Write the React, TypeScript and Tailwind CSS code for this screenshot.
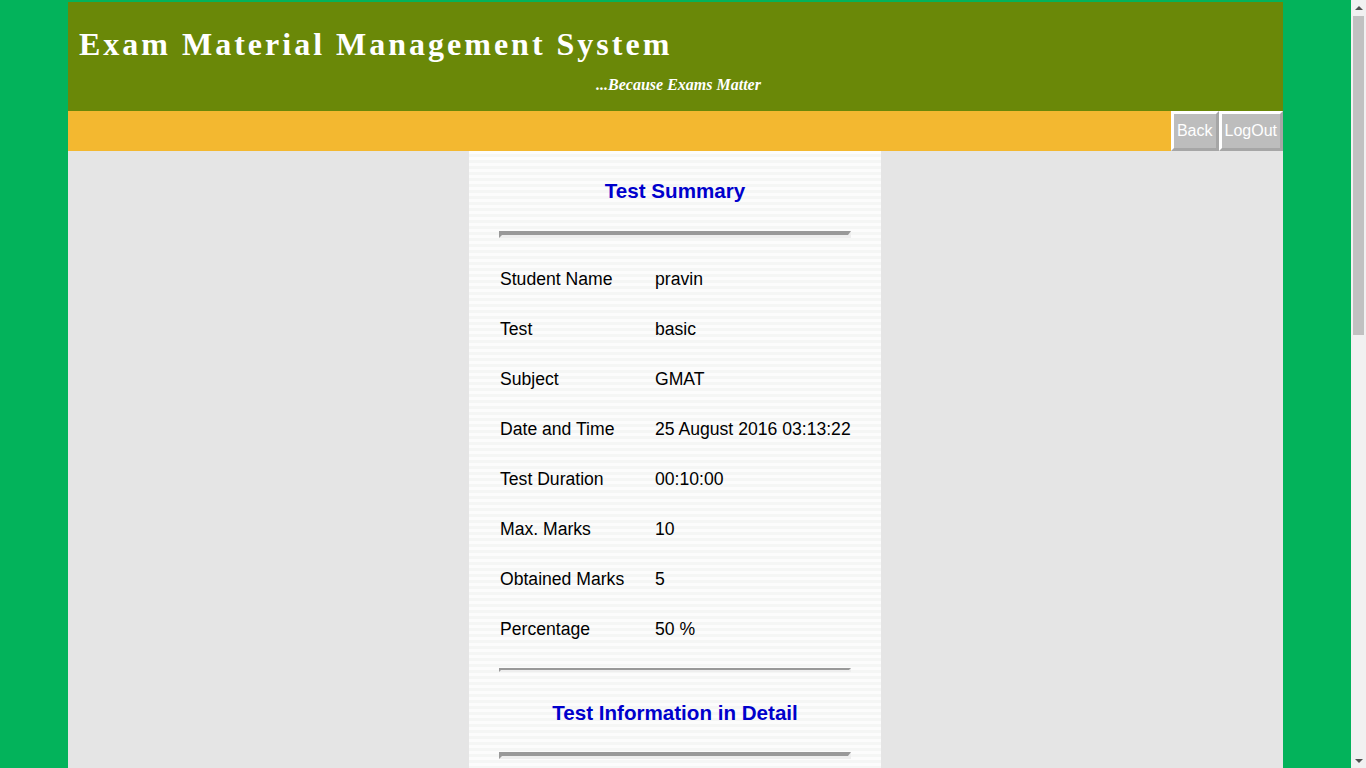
import React from "react";

const rows: [string, string][] = [
  ["Student Name", "pravin"],
  ["Test", "basic"],
  ["Subject", "GMAT"],
  ["Date and Time", "25 August 2016 03:13:22"],
  ["Test Duration", "00:10:00"],
  ["Max. Marks", "10"],
  ["Obtained Marks", "5"],
  ["Percentage", "50 %"],
];

function ThickRule({ className = "" }: { className?: string }) {
  return (
    <div
      className={
        "h-[7px] border-t-[4px] border-l-[3px] border-t-[#999999] border-l-[#999999] border-b-[3px] border-r-[3px] border-b-[#eeeeee] border-r-[#eeeeee] " +
        className
      }
    />
  );
}

function ScrollBar() {
  return (
    <div className="fixed right-0 top-0 flex h-screen w-[15px] flex-col items-center bg-[#f1f1f1]">
      <div className="flex h-[15px] w-full items-center justify-center">
        <div className="h-0 w-0 border-x-[4px] border-b-[4px] border-x-transparent border-b-[#505050]" />
      </div>
      <div className="mt-[1px] h-[319px] w-[11px] bg-[#c1c1c1]" />
      <div className="flex-1" />
      <div className="flex h-[15px] w-full items-center justify-center">
        <div className="h-0 w-0 border-x-[4px] border-t-[4px] border-x-transparent border-t-[#505050]" />
      </div>
    </div>
  );
}

export default function App() {
  return (
    <div
      className="min-h-screen bg-[#03b35b] pr-[15px] pt-[2px]"
      style={{ fontFamily: '"Liberation Sans", Arial, sans-serif' }}
    >
      <div className="mx-auto w-[1215px]">
        <header className="h-[109px] bg-[#6a8808] pl-[11px] pr-[5px] pt-[24px] text-white">
          <h1
            className="h-[36px] text-[32px] font-bold leading-[36px] tracking-[3px]"
            style={{ fontFamily: '"Liberation Serif", "Times New Roman", serif' }}
          >
            Exam Material Management System
          </h1>
          <p
            className="mt-[13px] text-center text-[16px] font-bold italic leading-[20px]"
            style={{ fontFamily: '"Liberation Serif", "Times New Roman", serif' }}
          >
            ...Because Exams Matter
          </p>
        </header>
        <nav className="flex h-[40px] justify-end bg-[#f3b830]">
          <button className="h-[40px] border-[3px] border-t-white border-l-white border-b-[#a6a6a6] border-r-[#a6a6a6] bg-[#bdbdbd] px-[3px] text-[16px] leading-none text-white">
            Back
          </button>
          <button className="h-[40px] border-[3px] border-t-white border-l-white border-b-[#a6a6a6] border-r-[#a6a6a6] bg-[#bdbdbd] px-[3px] text-[16px] leading-none text-white">
            LogOut
          </button>
        </nav>
        <main className="bg-[#e5e5e5]">
          <section className="ml-[401px] w-[412px] bg-[repeating-linear-gradient(180deg,#fcfcfc_0px,#fcfcfc_3px,#f5f6f5_3px,#f5f6f5_6px)] px-[30px] pb-[1010px] pt-[28px]">
            <h2 className="h-[24px] text-center text-[20.6px] font-bold leading-[24px] text-[#0000cc]">Test Summary</h2>
            <ThickRule className="mt-[28px]" />
            <div className="mt-[16px]">
              {rows.map(([label, value]) => (
                <div key={label} className="flex h-[50px] items-center whitespace-nowrap text-[17.6px] text-black">
                  <span className="w-[156px] shrink-0 pl-[1px]">{label}</span>
                  <span>{value}</span>
                </div>
              ))}
            </div>
            <div className="mt-[14px] h-[4px] border-t-[2px] border-l-[2px] border-t-[#999999] border-l-[#999999] border-b-[2px] border-r-[2px] border-b-[#eeeeee] border-r-[#eeeeee]" />
            <h2 className="mt-[29px] h-[24px] text-center text-[20.6px] font-bold leading-[24px] text-[#0000cc]">
              Test Information in Detail
            </h2>
            <ThickRule className="mt-[27px]" />
          </section>
        </main>
      </div>
      <ScrollBar />
    </div>
  );
}
